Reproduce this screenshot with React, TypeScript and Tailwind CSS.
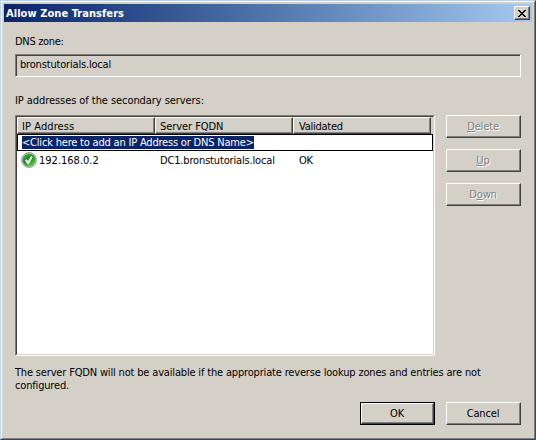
import type { ReactNode } from 'react';

const raised =
  'border border-t-white border-l-white border-r-[#404040] border-b-[#404040] shadow-[inset_-1px_-1px_0_#808080]';

function DialogButton({
  children,
  disabled = false,
  isDefault = false,
}: {
  children: ReactNode;
  disabled?: boolean;
  isDefault?: boolean;
}) {
  const text = disabled ? 'text-[#808080] [text-shadow:1px_1px_0_#ffffff]' : 'text-black';
  return (
    <button
      disabled={disabled}
      className={`h-[23px] w-[75px] shrink-0 bg-[#d4d0c8] ${isDefault ? 'border border-black' : ''}`}
    >
      <span className={`flex h-full w-full items-center justify-center pr-px pb-px tracking-[-0.14px] ${raised} ${text}`}>
        <span>{children}</span>
      </span>
    </button>
  );
}

function HeaderCell({ children, tracking }: { children: ReactNode; tracking: string }) {
  return (
    <div className={`h-[17px] w-[138px] bg-[#d4d0c8] pt-[2px] pl-[4px] ${tracking} ${raised}`}>
      {children}
    </div>
  );
}

function ValidIcon() {
  return (
    <svg width="16" height="16" viewBox="0 0 16 16" className="shrink-0">
      <defs>
        <linearGradient id="valid" x1="0" y1="0" x2="0.6" y2="1">
          <stop offset="0" stopColor="#5cb85a" />
          <stop offset="0.5" stopColor="#168a1c" />
          <stop offset="1" stopColor="#4fc92e" />
        </linearGradient>
      </defs>
      <circle cx="8" cy="8" r="7.4" fill="#c4cac4" stroke="#88928a" strokeWidth="0.9" />
      <circle cx="8" cy="8" r="6.3" fill="url(#valid)" />
      <path d="M4.8 7.8 L7.1 11 L10.9 4.4" fill="none" stroke="#fff" strokeWidth="2" />
    </svg>
  );
}

export default function App() {
  return (
    <div className="flex h-[440px] w-[536px] cursor-default flex-col overflow-hidden border border-t-[#b9d1ea] border-r-[#33475f] border-b-[#33475f] border-l-[#b9d1ea] bg-[#d4d0c8] font-['DejaVu_Sans_Condensed','DejaVu_Sans',sans-serif] text-[11px] leading-[13px] text-black">
      <div className="flex grow flex-col border border-t-white border-r-[#808080] border-b-[#808080] border-l-white px-[2px] pt-[2px]">
        <div className="flex h-[18px] shrink-0 items-center justify-between bg-linear-to-r from-[#0a246a] to-[#a6caf0] px-[2px]">
          <span className="font-bold tracking-[0.06px] whitespace-nowrap text-white">
            Allow Zone Transfers
          </span>
          <button className={`flex h-[14px] w-4 items-center justify-center bg-[#d4d0c8] ${raised}`}>
            <svg width="8" height="7" viewBox="0 0 8 7" shapeRendering="crispEdges">
              <path
                d="M0 0h2v1h1v1h2v-1h1v-1h2v1h-1v1h-1v1h-1v1h1v1h1v1h1v1h-2v-1h-1v-1h-2v1h-1v1h-2v-1h1v-1h1v-1h1v-1h-1v-1h-1v-1h-1z"
                fill="#000"
              />
            </svg>
          </button>
        </div>
        <div className="flex grow flex-col pr-[10px] pl-[11px]">
          <div className="mt-[13px] tracking-[-0.32px]">DNS zone:</div>
          <div className="mt-[6px] h-[23px] w-[506px] border border-t-[#808080] border-r-white border-b-white border-l-[#808080] pt-[3px] pl-[4px] tracking-[-0.18px] shadow-[inset_1px_1px_0_#404040]">
            bronstutorials.local
          </div>
          <div className="mt-[17px] tracking-[-0.07px]">IP addresses of the secondary servers:</div>
          <div className="mt-[8px] flex">
            <div className="h-[241px] w-[420px] border border-t-[#808080] border-r-white border-b-white border-l-[#808080]">
              <div className="h-full border border-t-[#404040] border-r-[#d4d0c8] border-b-[#d4d0c8] border-l-[#404040] bg-white">
                <div className="flex bg-[#d4d0c8]">
                  <HeaderCell tracking="tracking-[0.08px]">IP Address</HeaderCell>
                  <HeaderCell tracking="tracking-[-0.06px]">Server FQDN</HeaderCell>
                  <HeaderCell tracking="tracking-[-0.26px]">
                    <span className="pl-px">Validated</span>
                  </HeaderCell>
                </div>
                <div className="h-[17px] border border-black pt-px pl-[4px]">
                  <div className="h-[13px] w-[232px] bg-[#0a246a] tracking-[-0.195px] whitespace-nowrap text-white">
                    &lt;Click here to add an IP Address or DNS Name&gt;
                  </div>
                </div>
                <div className="flex h-[17px] items-center pl-[4px] whitespace-nowrap">
                  <ValidIcon />
                  <span className="w-[123px] pt-px pl-[2px]">192.168.0.2</span>
                  <span className="w-[138px] pt-px tracking-[-0.16px]">DC1.bronstutorials.local</span>
                  <span className="pt-px pl-px tracking-[-0.3px]">OK</span>
                </div>
              </div>
            </div>
            <div className="ml-[11px] flex flex-col gap-[11px]">
              <DialogButton disabled>
                <u>D</u>elete
              </DialogButton>
              <DialogButton disabled>
                <u>U</u>p
              </DialogButton>
              <DialogButton disabled>
                D<u>o</u>wn
              </DialogButton>
            </div>
          </div>
          <div className="mt-[10px] tracking-[-0.17px] whitespace-nowrap">
            The server FQDN will not be available if the appropriate reverse lookup zones and entries are not
            <br />
            configured.
          </div>
          <div className="mt-[10px] flex justify-end gap-[11px] pr-px">
            <DialogButton isDefault>OK</DialogButton>
            <DialogButton>Cancel</DialogButton>
          </div>
        </div>
      </div>
    </div>
  );
}
